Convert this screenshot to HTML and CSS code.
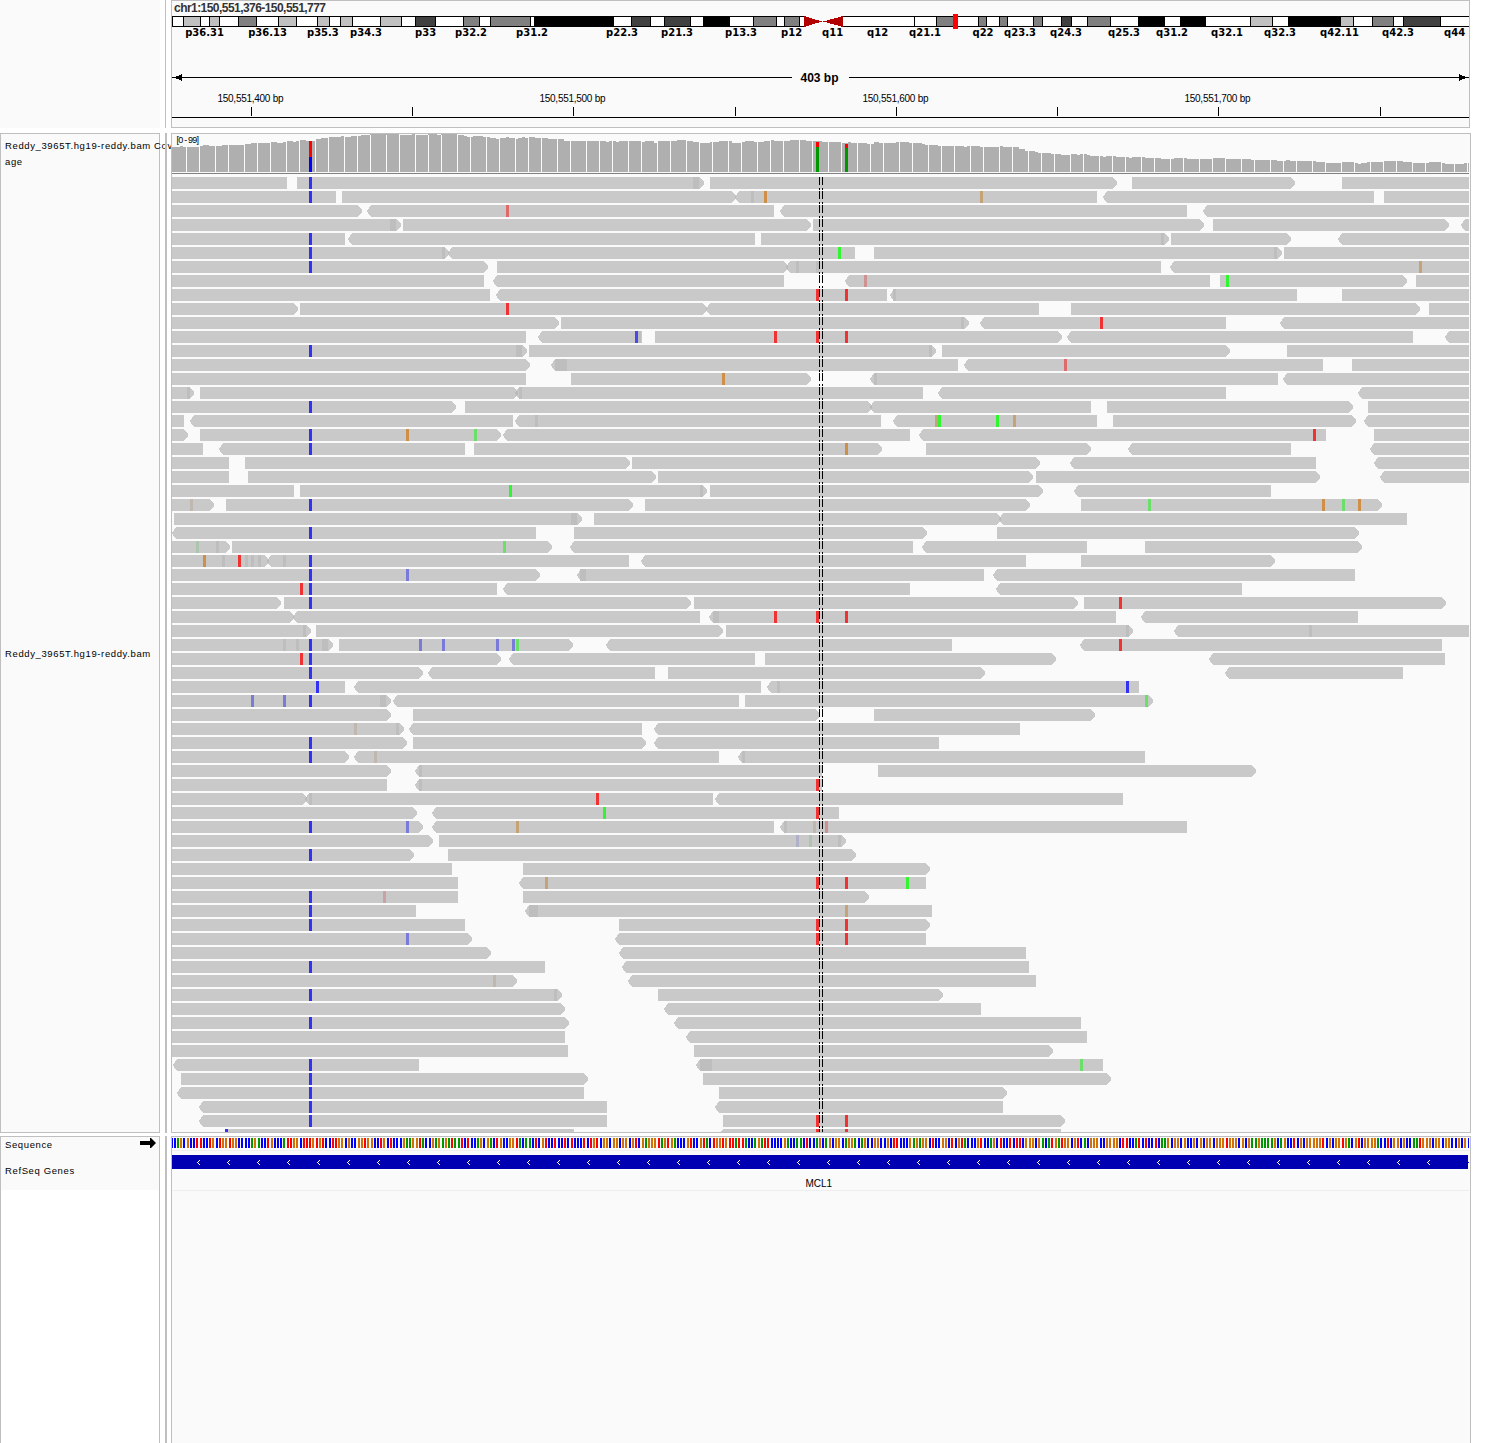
FILE: index.html
```html
<!DOCTYPE html>
<html lang="en">
<head>
<meta charset="utf-8">
<title>chr1:150,551,376-150,551,777</title>
<link rel="stylesheet" href="styles.css">
</head>
<body>
<main class="viewer">
  <section class="band band-header">
    <div class="names names-blank"></div>
    <div class="divider divider-thin"></div>
    <div class="panel panel-header">
      <svg id="header" class="canvas" width="1297" height="126" viewBox="172 1 1297 126"></svg>
    </div>
  </section>
  <section class="band band-data">
    <div class="names names-data">
      <div class="label label-coverage">Reddy_3965T.hg19-reddy.bam Cov<br>age</div>
      <div class="label">Reddy_3965T.hg19-reddy.bam</div>
    </div>
    <div class="divider"></div>
    <div class="panel">
      <svg id="coverage" class="canvas" width="1297" height="43" viewBox="172 134 1297 43"></svg>
      <svg id="reads" class="canvas" width="1297" height="955" viewBox="172 177 1297 955"></svg>
    </div>
  </section>
  <section class="band band-features">
    <div class="names names-features">
      <div class="label label-sequence"><span>Sequence</span>
        <svg class="strand" width="16" height="10" viewBox="0 0 16 10"><path d="M0 3H10V0H11L16 5L11 10H10V7H0Z"/></svg>
      </div>
      <div class="label">RefSeq Genes</div>
    </div>
    <div class="divider"></div>
    <div class="panel">
      <svg id="features" class="canvas" width="1297" height="306" viewBox="172 1137 1297 306"></svg>
    </div>
  </section>
</main>
<script src="tracks.js"></script>
</body>
</html>
```
FILE: styles.css
```css
* { box-sizing: border-box; }
body {
  margin: 0;
  background: #fff;
  color: #000;
  font-family: "Liberation Sans", Arial, sans-serif;
  font-size: 10px;
}
.viewer {
  display: grid;
  grid-template-rows: 133px 1003px 307px;
  height: 1443px;
  overflow: hidden;
}
.band { display: grid; grid-template-columns: 165px 6px 1300px; }
.band-header { padding-bottom: 5px; }
.band-data { padding-bottom: 3px; }
.names {
  width: 160px;
  display: flex;
  flex-direction: column;
  background: #fafafa;
  border: 1px solid #bfbfbf;
  white-space: nowrap;
}
.names-blank { border: 0; }
.names-features {
  border-bottom: 0;
  background: linear-gradient(#fafafa 53px, #fff 53px);
}
.divider { width: 2px; background: #bfbfbf; }
.divider-thin { width: 1px; }
.panel {
  position: relative;
  z-index: 1;
  background: #fafafa;
  border: 1px solid #bfbfbf;
}
.panel-header { width: 1299px; }
.band-features .panel { border-bottom: 0; }
.canvas { display: block; shape-rendering: crispEdges; }
.label { padding-left: 4px; font-size: 9.5px; line-height: 16px; letter-spacing: .62px; }
.label-coverage { width: 170px; height: 508px; padding-top: 4px; overflow: hidden; }
.names-data .label:last-child { padding-top: 4px; }
.label-sequence {
  display: flex;
  justify-content: space-between;
  height: 26px;
  padding-right: 3px;
}
.names-features .label { line-height: 16px; }
.strand { margin-top: 1px; }
.locus { font: bold 12px "Liberation Sans", Arial, sans-serif; fill: #333; }
.cyto { font: bold 10px "DejaVu Sans", Verdana, sans-serif; }
.span { font: bold 12px "Liberation Sans", Arial, sans-serif; text-anchor: middle; }
.tick { font-size: 10px; text-anchor: middle; }
.gene { font-size: 10px; }
.range { font-size: 9px; }
.read { fill: #b4b4b4; fill-opacity: .7; }
.cov { fill: #afafaf; }
.center { stroke: #000; stroke-dasharray: 8 3 2 1; }
.chev { fill: none; stroke: #fff; }
```
FILE: tracks.js
```js
const NS = 'http://www.w3.org/2000/svg';
function add(parent, tag, attrs, text) {
  const el = document.createElementNS(NS, tag);
  for (const k in attrs) el.setAttribute(k, attrs[k]);
  if (text) el.textContent = text;
  parent.appendChild(el);
  return el;
}
function rect(p, x, y, w, h, fill) { return add(p, 'rect', { x, y, width: w, height: h, fill }); }

/* Ideogram, span and ruler */
const header = document.getElementById('header');
add(header, 'text', { x: 174, y: 12, class: 'locus', textLength: 152 }, 'chr1:150,551,376-150,551,777');
const stain = { W: '#fff', L: '#c0c0c0', M: '#808080', D: '#404040', B: '#000' };
const bands = '172W 183L 200W 209L 219W 238M 256W 278L 296W 317L 329W 340L 352W 380L 401W 415D 435W 463M 479W 490M 530W 534B 613W 631D 650W 664D 690W 703B 729W 753M 776W 784M 799W 842W 914W 936M 957W 978M 986W 999M 1007W 1033M 1042W 1061D 1071W 1087M 1110W 1138B 1164W 1180B 1205W 1250L 1272W 1288B 1339W 1340L 1353W 1372M 1393W 1403D 1440W'
  .split(' ').map(s => [parseInt(s, 10), s.slice(-1)]);
rect(header, 172, 16, 632, 11, '#000');
rect(header, 842, 16, 627, 11, '#000');
bands.forEach(([x, c], i) => {
  let end = i + 1 < bands.length ? bands[i + 1][0] : 1469;
  if (x === 799) end = 804;
  rect(header, x + 1, 17, end - x - 1, 9, stain[c]);
});
add(header, 'path', { d: 'M804 16L822 21.5L804 27ZM843 16L823 21.5L843 27Z', fill: '#b20000' });
rect(header, 953, 14, 5, 15, '#f00');
'185.7 p36.31,248.7 p36.13,307.5 p35.3,350.6 p34.3,415.6 p33,455.6 p32.2,516.6 p31.2,606.6 p22.3,661.6 p21.3,725.6 p13.3,781.6 p12,822.6 q11,867.6 q12,909.6 q21.1,973 q22,1004.6 q23.3,1050.6 q24.3,1108.6 q25.3,1156.6 q31.2,1211.6 q32.1,1264.6 q32.3,1320.6 q42.11,1382.6 q42.3,1444.6 q44'
  .split(',').forEach(s => { const [x, t] = s.split(' '); add(header, 'text', { x: x - .5, y: 36, class: 'cyto' }, t); });
rect(header, 172, 77, 620, 1, '#000');
rect(header, 849, 77, 620, 1, '#000');
add(header, 'path', { d: 'M174 77.5L182 74V81ZM1467 77.5L1459 74V81Z' });
add(header, 'text', { x: 819.5, y: 82, class: 'span', textLength: 38 }, '403 bp');
rect(header, 172, 117, 1297, 1, '#000');
[251, 412, 573, 735, 896, 1057, 1218, 1380].forEach(x => rect(header, x, 107, 1, 9, '#000'));
[[250.5, 400], [572.5, 500], [895.5, 600], [1217.5, 700]].forEach(([x, n]) =>
  add(header, 'text', { x, y: 102, class: 'tick', textLength: 66 }, '150,551,' + n + ' bp'));

/* Coverage: x position and bar top */
const cov = document.getElementById('coverage');
const tops = '172,147 180,146 183,147 200,146 203,145 209,146 222,145 245,144 251,143 271,142 277,143 283,142 287,141 293,142 296,141 300,140 306,141 315,139 321,138 328,137 341,136 344,137 351,136 361,135 370,134 399,135 412,134 415,135 428,134 437,135 441,134 457,135 464,136 467,137 473,136 483,137 490,138 496,139 499,138 506,137 509,138 515,139 518,138 522,137 525,138 529,137 535,138 548,139 564,141 606,142 609,141 616,142 619,141 642,142 645,141 654,143 657,141 677,140 686,141 693,142 700,143 710,142 719,141 732,143 741,142 745,141 754,142 764,141 771,140 774,141 790,140 806,141 822,142 841,143 848,142 851,143 867,144 874,142 879,143 896,142 909,143 922,144 925,145 938,146 964,147 967,146 980,147 1000,146 1003,147 1019,149 1025,151 1035,152 1038,153 1051,154 1061,155 1071,154 1077,155 1080,154 1087,155 1090,156 1103,157 1106,156 1116,157 1129,158 1132,157 1145,158 1161,159 1174,158 1187,159 1213,158 1225,159 1251,160 1277,161 1286,160 1290,161 1316,162 1325,163 1342,162 1354,163 1358,164 1361,163 1367,162 1384,161 1403,162 1412,163 1429,162 1441,163 1445,164 1464,163 1469,163'
  .split(' ').map(s => s.split(',').map(Number));
let d = 'M172 172';
tops.forEach(([x, y], i) => { d += 'V' + y + (i + 1 < tops.length ? 'H' + tops[i + 1][0] : ''); });
add(cov, 'path', { d: d + 'V172Z', class: 'cov' });
[186, 199, 215, 228, 244, 257, 270, 286, 299, 315, 328, 344, 357, 370, 386, 399, 415, 428, 441, 457, 470, 486, 499, 515, 528, 541, 557, 570, 586, 599, 612, 628, 641, 657, 670, 686, 699, 712, 728, 741, 757, 770, 783, 799, 812, 828, 841, 857, 870, 883, 899, 912, 928, 941, 954, 970, 983, 999, 1012, 1028, 1041, 1054, 1070, 1083, 1099, 1112, 1125, 1141, 1154, 1170, 1183, 1199, 1212, 1225, 1241, 1254, 1270, 1283, 1296, 1312, 1325, 1341, 1354, 1370, 1383, 1396, 1412, 1425, 1441, 1454, 1467]
  .forEach(x => rect(cov, x, 135, 1, 37, '#fafafa'));
rect(cov, 309, 141, 3, 16, '#f00'); rect(cov, 309, 157, 3, 15, '#00f');
rect(cov, 816, 142, 3, 5, '#f00'); rect(cov, 816, 147, 3, 25, '#009600');
rect(cov, 845, 144, 3, 4, '#f00'); rect(cov, 845, 148, 3, 24, '#009600');
rect(cov, 172, 173, 1297, 1, '#808080');
add(cov, 'text', { x: 176.5, y: 143, class: 'range', textLength: 22.5 }, '[0 - 99]');

/* Reads: one line per row. "<" and ">" mark the strand tip; after "|" come mismatches. */
const ink = { b: '#3232f0', u: '#7a7ad8', v: '#b0b0c8', r: '#f03232', s: '#df6a6a', t: '#cf9292', q: '#c9a3a3', o: '#cf8f48', n: '#c6a377', m: '#c0b8ae', g: '#32f532', h: '#6adf6a', f: '#aec4ae', k: '#bebebe' };
const rows = `172-287 297-705> 710-1118> 1132-1296> 1342-1469|b309 k693:6
172-336 342-737> <734-1097 <1102-1374 1384-1469|b309 k751 o764 n980
172-363> <366-774 <779-1187 <1202-1469|s506
172-402> 403-812> 813-1205> 1213-1450> <1460-1469|k390:6
172-345 <347-755 761-1170> 1171-1292> <1337-1469|b309 k1161
172-450> <447-855 874-1283> 1284-1469|b309 k442 g838 k1274
172-489> 497-789> <785-1161 <1169-1469|b309 k796 k816 n1419
172-484 <492-784 <844-1210 1220-1408> 1416-1469|t864 g1226
172-490 <495-887 <889-1297 1342-1469|r816 r845 k893
172-299> 300-708> <705-1039 1071-1421> 1429-1469|r506
172-560> 561-970> <979-1226 <1279-1469|k961 r1100
172-526 <537-642 655-1063> <1066-1413 <1444-1469|c635 k638 r774 r816 r845
172-528> 529-937> 942-1231> 1287-1469|b309 k516:6 k929
172-531> <550-958 <963-1323 1352-1469|k555:12 s1064
172-526 571-812> <869-1278 <1282-1469|o722 k874
172-195> 200-519> <514-923 <937-1226 <1357-1469|k187 k519
172-457> 465-873> <869-1091 1107-1354> 1368-1469|b309
172-184 <189-513 <514-881 <892-1097 1113-1357> <1363-1469|k535 n935 g938 g996 n1013
172-189> 200-502> <502-910 <918-1326 1374-1469|b309 o406 h474 r1313
172-203 <218-465 474-883> 926-1092> <1127-1291 <1369-1469|b309 o845
172-229 245-631> 632-1041> <1069-1316 <1373-1469|
172-229 248-657> 658-1034> 1036-1321> <1379-1469|
172-294 300-708> 710-1044> <1073-1271|g509 k700
172-215> 226-634> 645-1031> 1081-1383>|m190 b309 h1148 o1322 h1342 o1358
174-583> 594-1002> <998-1407|k571:6
<171-536 574-928> 997-1360>|b309
172-231> 232-553> <569-913 <921-1087 1145-1363>|f196 k216 h503
172-270> <266-629 <640-1026 1081-1276>|o203 k222 r238 k245 k251 k258 k283 b309
172-541> <576-984 <992-1355|b309 u406 k580:6
172-497 <502-910 <995-1242|r300 b309
172-282> 284-692> 694-1079> 1084-1447>|b309 r1119
172-295> <292-700 <708-1116 <1140-1358|k713:6 r774 r816 r845
172-312> 316-724> 726-1134> <1173-1469|k303 k1126 k1309
172-334> 339-574> <605-952 <1079-1442|k283 k296 b309 k322:6 u419 u442 u496 u512 h516 r1119
172-502> <508-755 765-1057> <1208-1445|r300 b309
172-424> <427-655 668-986> <1224-1403|b309
172-345 <353-761 <766-1139|b316 k777 b1126
172-392> <392-739 745-1154>|u251 u283 b309 k380:6 h1145
172-392> 413-821> 874-1096>|
172-405> <408-642 <653-1020|m354 k396
172-408> 413-647> <653-939|b309
172-350> <353-719 <737-1145|b309 m374 k742
172-392> <414-822 878-1257>|k419
172-387 <414-822|k419 r816
172-308> <304-713 <714-1123|k309 r596
172-418> <431-839|g603 r816
172-424> <431-774 <779-1187|b309 u406 n516 k784 m813 t825
172-434> 439-847>|v796 f809 k838
172-415> 448-857>|b309
172-452 523-931>|
172-458 <518-926|n545 r816 r845 g906
172-458 523-870>|b309 q383
172-416 <524-932|b309 k529:9 n845
172-465 619-931>|b309 r816 r845
172-473> <614-926|u406 r816 r845
172-492> <618-1026|
172-545 <621-1029|b309
172-518> <627-1036|m493
172-563> 658-944>|b309 k554
172-566> <663-981|
172-570> <673-1081|b309
172-565 <685-1087|
172-568 694-1054>|
<172-419 <695-1103|b309 k700:12 h1080
181-589> 703-1112>|b309
<176-584 719-1008>|b309
<198-607 <714-1003|b309
<198-607 723-1066>|b309 r816 r845
<223-574 <718-1061|b225 r816 r845`.split('\n');
ink.c = '#4a4ae6';
const reads = document.getElementById('reads');
rows.forEach((row, i) => {
  const y = 177 + 14 * i;
  const [segs, marks] = row.split('|');
  segs.split(' ').forEach(s => {
    const left = s[0] === '<', right = s.endsWith('>');
    const [a, b] = s.replace(/[<>]/g, '').split('-').map(Number);
    const x0 = left ? a + 5 : a, x1 = right ? b - 5 : b;
    add(reads, 'path', {
      class: 'read',
      d: `M${x0} ${y}H${x1}${right ? `L${b - .3} ${y + 6}L${x1} ${y + 12}` : `V${y + 12}`}H${x0}${left ? `L${a + .8} ${y + 6.3}` : ''}Z`
    });
  });
  if (marks) marks.split(' ').forEach(m => {
    const [x, w] = m.slice(1).split(':').map(Number);
    rect(reads, x, y, w || 3, 12, ink[m[0]]);
  });
});
[819.5, 822.5].forEach(x => add(reads, 'line', { x1: x, x2: x, y1: 177, y2: 1132, class: 'center' }));

/* Reference bases and gene */
const feat = document.getElementById('features');
const base = { B: '#00f', R: '#f00', G: '#009600', O: '#d17105' };
const seq = [
  [0, 'BBGOB OBBR RBBRO BROO ROOBB BBGO GBBR OBBBG RROO BRRRO RORB BRROO BOBB OORO OBBRO BRBB BOGGO ORGB BOGO GOGRG GRBR BBGOB O'],
  [99, 'GBR OBBOO RGBG GBRB ORBBR BBRB RBBBR BROR BOOB OOBOO BORB OGOOO RGOR OGBBB ORBB ORGB ROORO RRGR RGBBG OGRR BBBB OGBBG GBRB BGOBG OBOO BGOOG BGOB BOOB BOBRR BBBO GOGOO BRBB OOBR BORGB BBOR BB'],
  [254, 'GOB RBBR BRRBO OOBO GBGR OGROO BORB GBOOO BBOO OOBR RBBGR BRBB RBGGO BOOB OBBOB OBOO BOOO ROOOB OBOG GOGGG GOBG OBBR BOBOO OOOR BOBOO ROGB ORBOO OOGB BRBO OBOBB GGRO OOBOO BOOB BOBO B']
];
seq.forEach(([start, s]) => [...s.replace(/ /g, '')].forEach((c, i) => {
  const x = Math.floor(171 + 3.2264 * (start + i));
  rect(feat, x, 1138, 2, 10, base[c]);
}));
rect(feat, 172, 1150, 1297, 1, '#eee');
rect(feat, 172, 1155, 1296, 14, '#0000b2');
rect(feat, 1468, 1162, 1, 1, '#0000b2');
for (let x = 197; x < 1440; x += 30)
  add(feat, 'path', { class: 'chev', d: `M${x + 3} 1160L${x + .5} 1162.5L${x + 3} 1165` });
add(feat, 'text', { x: 805.5, y: 1187, class: 'gene' }, 'MCL1');
rect(feat, 172, 1190, 1297, 1, '#eee');
```
